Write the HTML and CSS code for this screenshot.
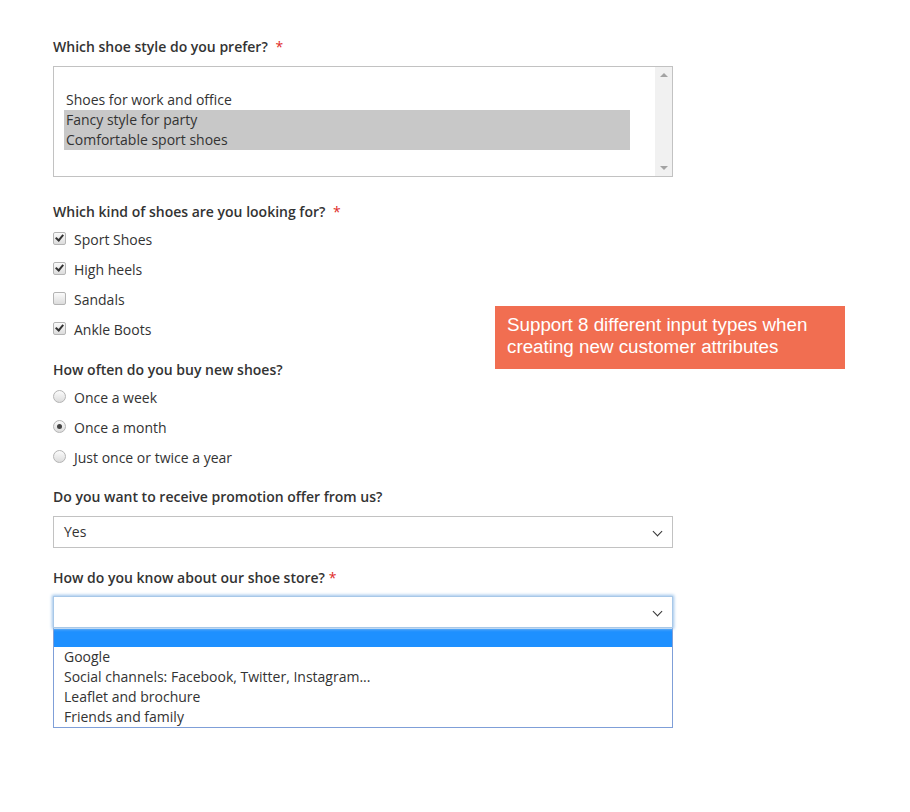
FILE: index.html
```html
<!DOCTYPE html>
<html lang="en">
<head>
    <meta charset="UTF-8">
    <title>Customer attributes</title>
    <link rel="stylesheet" href="styles.css">
</head>
<body>
    <div class="form">
        <div class="field">
            <div class="label">Which shoe style do you prefer? <span class="req">*</span></div>
            <div class="listbox">
                <div class="list-opts">
                    <div class="opt"></div>
                    <div class="opt">Shoes for work and office</div>
                    <div class="opt sel">Fancy style for party</div>
                    <div class="opt sel">Comfortable sport shoes</div>
                </div>
                <div class="scrollbar">
                    <span class="arr up"></span>
                    <span class="arr down"></span>
                </div>
            </div>
        </div>

        <div class="field">
            <div class="label">Which kind of shoes are you looking for? <span class="req">*</span></div>
            <div class="choices">
                <div class="choice"><span class="box checked"></span>Sport Shoes</div>
                <div class="choice"><span class="box checked"></span>High heels</div>
                <div class="choice"><span class="box"></span>Sandals</div>
                <div class="choice"><span class="box checked"></span>Ankle Boots</div>
            </div>
        </div>

        <div class="field field-radios">
            <div class="label">How often do you buy new shoes?</div>
            <div class="choices radios">
                <div class="choice"><span class="radio"></span>Once a week</div>
                <div class="choice"><span class="radio on"></span>Once a month</div>
                <div class="choice"><span class="radio"></span>Just once or twice a year</div>
            </div>
        </div>

        <div class="field">
            <div class="label">Do you want to receive promotion offer from us?</div>
            <div class="select">Yes<span class="chev"></span></div>
        </div>

        <div class="field">
            <div class="label label-tight">How do you know about our shoe store? <span class="req tight">*</span></div>
            <div class="select focus"><span class="chev"></span></div>
            <div class="dropdown">
                <div class="drop-opt hl"></div>
                <div class="drop-opt">Google</div>
                <div class="drop-opt">Social channels: Facebook, Twitter, Instagram...</div>
                <div class="drop-opt">Leaflet and brochure</div>
                <div class="drop-opt">Friends and family</div>
            </div>
        </div>

        <div class="callout">Support 8 different input types when creating new customer attributes</div>
    </div>
</body>
</html>
```

FILE: styles.css
```css
body {
    margin: 0;
    background: #fff;
    font-family: 'Open Sans', 'Noto Sans', sans-serif;
    font-size: 14px;
    line-height: 20px;
    color: #333;
}
.form {
    position: relative;
    width: 620px;
    padding: 37px 0 0 53px;
}
.field {
    margin-bottom: 20px;
}
.field-radios {
    margin-bottom: 19px;
}
.label {
    font-weight: 600;
    margin-bottom: 9px;
}
.label-tight {
    margin-bottom: 8px;
}
.req {
    color: #e02b27;
    font-weight: 400;
    margin-left: 4px;
}
.req.tight {
    margin-left: 0;
}

/* multiple select */
.listbox {
    display: flex;
    height: 109px;
    border: 1px solid #c2c2c2;
    margin-bottom: 25px;
}
.list-opts {
    flex: 1;
    padding: 3px 25px 0 10px;
}
.opt {
    height: 20px;
    padding-left: 2px;
}
.opt.sel {
    background: #c8c8c8;
}
.scrollbar {
    width: 17px;
    background: #f1f1f1;
    position: relative;
}
.arr {
    position: absolute;
    left: 5px;
    width: 0;
    height: 0;
    border-left: 4px solid transparent;
    border-right: 4px solid transparent;
}
.arr.up {
    top: 6px;
    border-bottom: 4px solid #a3a3a3;
}
.arr.down {
    bottom: 6px;
    border-top: 4px solid #a3a3a3;
}

/* checkboxes and radios */
.choices {
    display: flex;
    flex-direction: column;
    gap: 10px;
    margin-top: -1px;
}
.choice {
    display: flex;
    align-items: center;
    height: 20px;
}
.box, .radio {
    width: 11px;
    height: 11px;
    border: 1px solid #b4b4b4;
    background: linear-gradient(#fbfbfb, #dcdcdc);
    margin-right: 8px;
    margin-top: -4px;
    position: relative;
    flex-shrink: 0;
}
.box {
    border-radius: 2px;
}
.box.checked::after {
    content: "";
    position: absolute;
    left: 3px;
    top: 0px;
    width: 3px;
    height: 6px;
    border-right: 2px solid #333;
    border-bottom: 2px solid #333;
    transform: rotate(40deg);
}
.radio {
    border-radius: 50%;
}
.radio.on::after {
    content: "";
    position: absolute;
    left: 3px;
    top: 3px;
    width: 5px;
    height: 5px;
    border-radius: 50%;
    background: #444;
}

/* single select */
.select {
    position: relative;
    height: 30px;
    line-height: 30px;
    border: 1px solid #c2c2c2;
    padding-left: 10px;
}
.select.focus {
    border-color: #a8c8e8;
    box-shadow: 0 0 3px 1px #9cc3ea;
}
.chev {
    position: absolute;
    right: 11px;
    top: 11px;
    width: 6px;
    height: 6px;
    border-right: 1.5px solid #333;
    border-bottom: 1.5px solid #333;
    transform: rotate(45deg);
}
.dropdown {
    border: 1px solid #7f9fd8;
    border-top: none;
    padding-top: 1px;
}
.drop-opt {
    height: 20px;
    padding-left: 10px;
}
.drop-opt.hl {
    height: 18px;
    background: #1e90ff;
}

.callout {
    position: absolute;
    left: 495px;
    top: 306px;
    width: 328px;
    height: 51px;
    padding: 8px 10px 4px 12px;
    background: #f16e51;
    color: #fff;
    font-family: 'Liberation Sans', Arial, sans-serif;
    font-size: 18.8px;
    line-height: 22px;
}
```
